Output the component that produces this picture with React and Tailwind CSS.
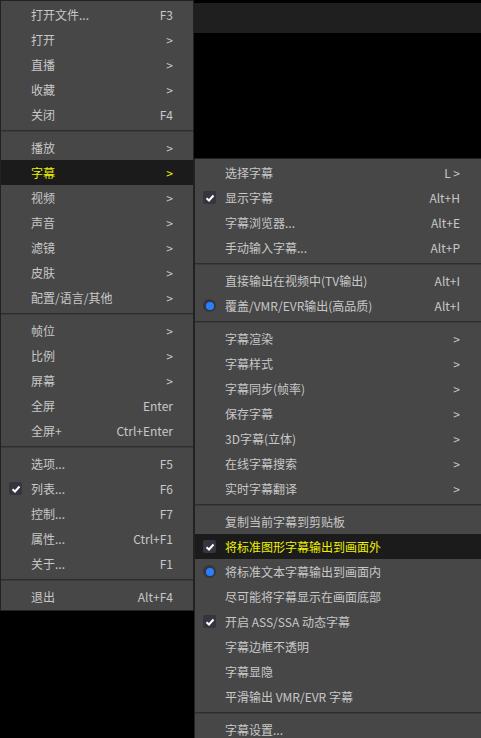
const left = [
  [['打开文件...', 'F3'], ['打开', '>'], ['直播', '>'], ['收藏', '>'], ['关闭', 'F4']],
  [['播放', '>'], ['字幕', '>', 'hl'], ['视频', '>'], ['声音', '>'], ['滤镜', '>'], ['皮肤', '>'], ['配置/语言/其他', '>']],
  [['帧位', '>'], ['比例', '>'], ['屏幕', '>'], ['全屏', 'Enter'], ['全屏+', 'Ctrl+Enter']],
  [['选项...', 'F5'], ['列表...', 'F6', 'check'], ['控制...', 'F7'], ['属性...', 'Ctrl+F1'], ['关于...', 'F1']],
  [['退出', 'Alt+F4']],
];

const sub = [
  [['选择字幕', 'L >'], ['显示字幕', 'Alt+H', 'check'], ['字幕浏览器...', 'Alt+E'], ['手动输入字幕...', 'Alt+P']],
  [['直接输出在视频中(TV输出)', 'Alt+I'], ['覆盖/VMR/EVR输出(高品质)', 'Alt+I', 'radio']],
  [['字幕渲染', '>'], ['字幕样式', '>'], ['字幕同步(帧率)', '>'], ['保存字幕', '>'], ['3D字幕(立体)', '>'], ['在线字幕搜索', '>'], ['实时字幕翻译', '>']],
  [['复制当前字幕到剪贴板', ''], ['将标准图形字幕输出到画面外', '', 'check', 'hl'], ['将标准文本字幕输出到画面内', '', 'radio'], ['尽可能将字幕显示在画面底部', ''], ['开启 ASS/SSA 动态字幕', '', 'check'], ['字幕边框不透明', ''], ['字幕显隐', ''], ['平滑输出 VMR/EVR 字幕', '']],
  [['字幕设置...', '']],
];

function Mark({ kind }) {
  if (kind === 'check')
    return (
      <span className="flex h-[13px] w-[13px] items-center justify-center rounded-[2px] bg-[#35353f]">
        <svg width="10" height="10" viewBox="0 0 10 10"><path d="M1.5 5.2 L4 7.5 L8.5 2.5" stroke="#fff" strokeWidth="2" fill="none" /></svg>
      </span>
    );
  if (kind === 'radio')
    return (
      <span className="flex h-[13px] w-[13px] items-center justify-center rounded-full bg-[#35353f]">
        <span className="h-[8px] w-[8px] rounded-full bg-[#2a7fff]" />
      </span>
    );
  return null;
}

function Menu({ groups, textX, keyW, arrowOnly }) {
  return groups.map((g, gi) => (
    <div key={gi}>
      {gi > 0 && <div className="my-[3px] h-[2px] border-t border-[#2e2e2e] bg-[#3c3c3c]" />}
      {g.map(([label, key, a, b]) => {
        const mark = a === 'check' || a === 'radio' ? a : null;
        const hl = a === 'hl' || b === 'hl';
        return (
          <div key={label} className={`flex h-[25px] items-center ${hl ? 'bg-[#1b1b1b] text-[#f0f000]' : 'text-[#c8c8c8]'}`}>
            <div className={`flex ${textX} shrink-0 items-center pl-[8px]`}><Mark kind={mark} /></div>
            <div className="flex-1 whitespace-nowrap">{label}</div>
            <div className={`${keyW} whitespace-nowrap text-right`}>{key}</div>
          </div>
        );
      })}
    </div>
  ));
}

export default function App() {
  return (
    <div className="relative h-[738px] w-[481px] overflow-hidden bg-black text-[12px]" style={{ fontFamily: '"Noto Sans CJK SC", "Microsoft YaHei", sans-serif' }}>
      <div className="absolute left-[194px] top-[3px] h-[30px] w-[287px] bg-[#1f1f1f]" />
      <div className="absolute left-0 top-0 w-[194px] border border-[#222] bg-[#474747] pt-[1px] pb-[1px]">
        <Menu groups={left} textX="w-[30px]" keyW="pr-[20px]" />
      </div>
      <div className="absolute left-[194px] top-[158px] w-[290px] border border-[#222] bg-[#474747] pt-[1px] pb-[3px]">
        <Menu groups={sub} textX="w-[30px]" keyW="pr-[23px]" />
      </div>
    </div>
  );
}
